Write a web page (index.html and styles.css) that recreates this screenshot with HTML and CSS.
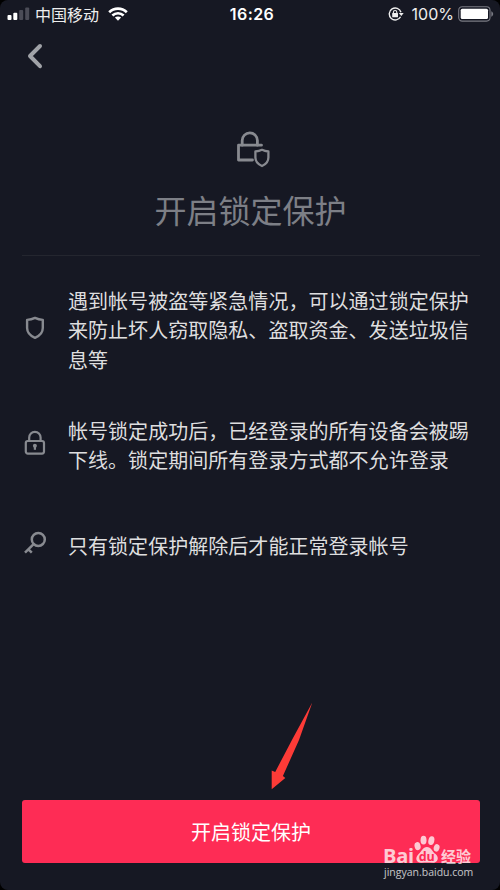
FILE: index.html
```html
<!DOCTYPE html>
<html lang="zh-CN">
<head>
    <meta charset="UTF-8">
    <meta name="viewport" content="width=device-width, initial-scale=1.0">
    <title>开启锁定保护</title>
    <link rel="stylesheet" href="styles.css">
</head>
<body>
    <div class="phone">
        <!-- Status Bar -->
        <div class="status-bar">
            <div class="status-left">
                <svg class="signal" width="23" height="14" viewBox="0 0 23 14">
                    <rect x="0.5" y="8" width="4" height="5" rx="1" fill="#fff"/>
                    <rect x="6.3" y="5.7" width="4" height="7.3" rx="1" fill="#fff"/>
                    <rect x="12.2" y="3" width="4" height="10" rx="1" fill="#4b4c57"/>
                    <rect x="18.2" y="0.5" width="4" height="12.5" rx="1" fill="#4b4c57"/>
                </svg>
                <span class="carrier">中国移动</span>
                <svg class="wifi" width="20" height="14" viewBox="0 0 20 14">
                    <g fill="none" stroke="#fff" stroke-width="2.7">
                        <path d="M1.2 5.2C6.2 0.4 13.8 0.4 18.8 5.2"/>
                        <path d="M4.4 8.5C7.6 5.5 12.4 5.5 15.6 8.5"/>
                    </g>
                    <path d="M6.9 10.6C8.7 9 11.3 9 13.1 10.6L10 13.7Z" fill="#fff"/>
                </svg>
            </div>
            <div class="time">16:26</div>
            <div class="status-right">
                <svg class="rotation" width="16" height="14" viewBox="0 0 16 14">
                    <path d="M12.6 9.8A6 6 0 1 1 13 5.2" fill="none" stroke="#eee" stroke-width="1.4"/>
                    <path d="M10.8 6.1H15.7L13.3 9Z" fill="#eee"/>
                    <rect x="4.2" y="6" width="5.8" height="4.3" rx="0.6" fill="#eee"/>
                    <path d="M5.4 6.4V5.2A1.7 1.7 0 0 1 8.8 5.2V6.4" fill="none" stroke="#eee" stroke-width="1.1"/>
                </svg>
                <span class="percent">100%</span>
                <svg class="battery" width="36" height="16" viewBox="0 0 36 16">
                    <rect x="0.7" y="0.7" width="31.3" height="14.4" rx="3.5" fill="none" stroke="#797a83" stroke-width="1.1"/>
                    <rect x="2.7" y="2.7" width="27.3" height="10.4" rx="1.5" fill="#fff"/>
                    <path d="M33.3 5.3C35.8 6.3 35.8 9.7 33.3 10.7Z" fill="#797a83"/>
                </svg>
            </div>
        </div>

        <!-- Back Button -->
        <div class="nav">
            <svg width="18" height="28" viewBox="0 0 18 28">
                <path d="M15 4L5 14L15 24.2" fill="none" stroke="#a0a2a7" stroke-width="4" stroke-linecap="round" stroke-linejoin="round"/>
            </svg>
        </div>

        <!-- Title Section -->
        <div class="title-section">
            <svg width="36" height="38" viewBox="0 0 36 38" fill="none" stroke="#888a90" stroke-width="2.8" stroke-linejoin="round" stroke-linecap="round">
                <path d="M7.2 14.2V9.5A7.6 7.6 0 0 1 22.4 9.5V14.2"/>
                <path d="M26.5 14.2H3.5V29H17.5"/>
                <path stroke-width="2.3" d="M27 18.8C29.2 20 31 20.4 33.4 20.5V26.5C33.4 30.2 30.8 33.3 27 35C23.2 33.3 20.4 30.2 20.4 26.5V20.5C22.9 20.4 24.8 20 27 18.8Z"/>
            </svg>
            <h1>开启锁定保护</h1>
        </div>

        <!-- Description List -->
        <div class="list">
            <div class="item">
                <svg width="26" height="26" viewBox="0 0 26 26" fill="none" stroke="#888a90" stroke-width="2.4" stroke-linejoin="round">
                    <path d="M13 3.9C15.6 5.2 18 5.8 20.8 5.9V14.1C20.8 18.6 17.7 21.9 13 23.9C8.3 21.9 5.1 18.6 5.1 14.1V5.9C8 5.8 10.4 5.2 13 3.9Z"/>
                </svg>
                <p>遇到帐号被盗等紧急情况，可以通过锁定保护来防止坏人窃取隐私、盗取资金、发送垃圾信息等</p>
            </div>
            <div class="item">
                <svg width="26" height="26" viewBox="0 0 26 26" fill="none" stroke="#888a90" stroke-width="2.2">
                    <path d="M7.2 11V7.5A5.7 5.7 0 0 1 18.6 7.5V11"/>
                    <rect x="3.8" y="11" width="18.2" height="12.6" rx="2"/>
                    <circle cx="12.9" cy="15.7" r="2" fill="#888a90" stroke="none"/>
                    <path d="M12.9 16V19.8"/>
                </svg>
                <p>帐号锁定成功后，已经登录的所有设备会被踢下线。锁定期间所有登录方式都不允许登录</p>
            </div>
            <div class="item">
                <svg width="26" height="26" viewBox="0 0 26 26" fill="none" stroke="#888a90" stroke-width="2.5">
                    <circle cx="16.3" cy="9.4" r="6.5"/>
                    <path d="M11.6 14.1L3 22.7M6.4 19.3L9.8 22.7"/>
                </svg>
                <p>只有锁定保护解除后才能正常登录帐号</p>
            </div>
        </div>

        <button class="lock-button" type="button">开启锁定保护</button>

        <!-- Arrow -->
        <svg class="arrow" width="42" height="88" viewBox="0 0 42 88">
            <path d="M41.3 0.5L22 36L4.2 70L0.7 68.5V87.3L14.3 76L11.9 74L28 38Z" fill="#fd3b37"/>
        </svg>

        <!-- Watermark -->
        <div class="watermark">
            <div class="brand">
                <span class="bai">Bai</span>
                <svg width="26" height="29" viewBox="0 0 27 30">
                    <g fill="#fff">
                        <ellipse cx="3.7" cy="11.5" rx="3.1" ry="4.2" transform="rotate(-15 3.7 11.5)"/>
                        <ellipse cx="9.9" cy="5.3" rx="3.1" ry="4.5"/>
                        <ellipse cx="18" cy="5.7" rx="3.1" ry="4.6" transform="rotate(12 18 5.7)"/>
                        <ellipse cx="23.5" cy="13.3" rx="3" ry="4" transform="rotate(15 23.5 13.3)"/>
                        <path d="M13.4 12.3C17.8 12.3 18.8 17 22.4 19.8C27 23.8 24 29 20 28.8C16 28.3 11.2 28.3 7.8 28.8C2.5 29.1 0.5 24 4.6 20C8.4 16.4 9 12.3 13.4 12.3Z"/>
                    </g>
                    <text x="13.2" y="26.7" text-anchor="middle">du</text>
                </svg>
                <span class="jingyan">经验</span>
            </div>
            <div class="site">jingyan.baidu.com</div>
        </div>
    </div>
</body>
</html>
```
FILE: styles.css
```css
body {
    margin: 0;
    background: #000;
    font-family: "Noto Sans CJK SC", sans-serif;
}

.phone {
    position: relative;
    box-sizing: border-box;
    width: 500px;
    height: 890px;
    background: #161823;
    border-radius: 8px;
    overflow: hidden;
    display: flex;
    flex-direction: column;
}

.status-bar {
    height: 28px;
    display: grid;
    grid-template-columns: 1fr 60px 1fr;
    align-items: center;
    color: #fff;
}

.status-left,
.status-right {
    display: flex;
    align-items: center;
}

.status-left {
    padding-left: 7px;
}

.carrier {
    font-size: 16px;
    line-height: 28px;
    margin-left: 5px;
    color: #eee;
}

.wifi {
    margin-left: 9px;
}

.time {
    font-family: Inter, sans-serif;
    font-size: 16px;
    font-weight: 600;
    letter-spacing: 0.4px;
    padding-left: 4px;
    text-align: center;
    white-space: nowrap;
}

.status-right {
    justify-content: flex-end;
    padding-right: 6px;
}

.rotation {
    margin-right: 8px;
    margin-bottom: 1px;
}

.percent {
    font-family: Inter, sans-serif;
    font-size: 16px;
    color: #eee;
    margin-right: 4px;
}

.nav {
    height: 56px;
    padding-left: 25px;
    display: flex;
    align-items: center;
}

.title-section {
    height: 171px;
    margin: 0 20px 0 22px;
    border-bottom: 1px solid #24262f;
    display: flex;
    flex-direction: column;
    align-items: center;
}

.title-section svg {
    margin-top: 47px;
    margin-left: 4px;
}

h1 {
    margin: 17px 1px 0 0;
    font-size: 32px;
    line-height: 46px;
    font-weight: 400;
    color: #7d7f86;
}

.list {
    margin: 30px 22px 0;
}

.item {
    display: flex;
    align-items: center;
    margin-bottom: 42px;
}

.item:nth-child(2) {
    margin-bottom: 56px;
}

.item svg {
    flex: none;
    margin-right: 20px;
    margin-bottom: 5px;
}

.item p {
    width: 404px;
    margin: 0;
    font-size: 20px;
    line-height: 29.3px;
    letter-spacing: 0.04px;
    color: #dededf;
}

.lock-button {
    height: 63px;
    margin: auto 20px 27px 22px;
    border: none;
    border-radius: 3px;
    background: #fe2c55;
    color: #fff;
    font-family: inherit;
    font-size: 20px;
}

.arrow {
    position: absolute;
    left: 271px;
    top: 702px;
}

.watermark {
    position: absolute;
    left: 383px;
    top: 835px;
    color: #fff;
    opacity: 0.75;
}

.brand {
    height: 29px;
    margin-bottom: 1px;
    display: flex;
    align-items: flex-end;
}

.bai {
    font-family: "Open Sans", sans-serif;
    font-size: 20px;
    font-weight: 700;
    letter-spacing: -0.2px;
    line-height: 16px;
}

.brand text {
    font-family: "Open Sans", sans-serif;
    font-size: 13px;
    font-weight: 700;
    fill: #fe2c55;
}

.jingyan {
    font-size: 15px;
    font-weight: 700;
    line-height: 16px;
    margin-left: 1px;
}

.site {
    font-family: "Open Sans", sans-serif;
    font-size: 10.5px;
    line-height: 14px;
    margin-left: 1px;
}
```
